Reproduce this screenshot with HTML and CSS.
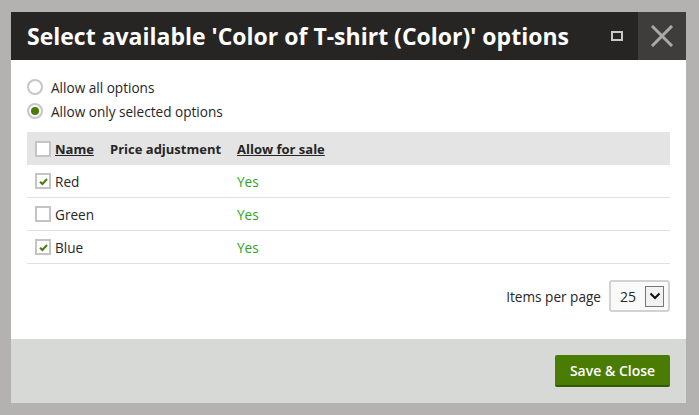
FILE: index.html
```html
<!DOCTYPE html>
<html>
<head>
<meta charset="utf-8">
<link rel="stylesheet" href="styles.css">
</head>
<body>
<div class="dialog">
  <div class="header">
    <h1 class="title">Select available 'Color of T-shirt (Color)' options</h1>
    <div class="maximize"><span class="max-box"></span></div>
    <div class="close">
      <svg width="22" height="22" viewBox="0 0 22 22"><path d="M2 2 L20 20 M20 2 L2 20" stroke="#a9a9a9" stroke-width="3" stroke-linecap="square"/></svg>
    </div>
  </div>
  <div class="content">
    <div class="radios">
      <label class="radio-row"><span class="radio"></span>Allow all options</label>
      <label class="radio-row"><span class="radio checked"></span>Allow only selected options</label>
    </div>
    <div class="grid">
      <div class="row head">
        <div class="cell c-name"><span class="cb"></span><span class="link">Name</span></div>
        <div class="cell c-price">Price adjustment</div>
        <div class="cell c-allow"><span class="link">Allow for sale</span></div>
      </div>
      <div class="row">
        <div class="cell c-name"><span class="cb on"><svg width="11" height="11" viewBox="0 0 11 11"><path d="M2 5.8 L4.4 8 L9 3" fill="none" stroke="#4a7c0a" stroke-width="2"/></svg></span>Red</div>
        <div class="cell c-price"></div>
        <div class="cell c-allow yes">Yes</div>
      </div>
      <div class="row">
        <div class="cell c-name"><span class="cb"></span>Green</div>
        <div class="cell c-price"></div>
        <div class="cell c-allow yes">Yes</div>
      </div>
      <div class="row">
        <div class="cell c-name"><span class="cb on"><svg width="11" height="11" viewBox="0 0 11 11"><path d="M2 5.8 L4.4 8 L9 3" fill="none" stroke="#4a7c0a" stroke-width="2"/></svg></span>Blue</div>
        <div class="cell c-price"></div>
        <div class="cell c-allow yes">Yes</div>
      </div>
    </div>
    <div class="pager">
      <span class="pager-label">Items per page</span>
      <div class="select">
        <span class="select-val">25</span>
        <span class="select-btn"><svg width="12" height="8" viewBox="0 0 12 8"><path d="M1.5 1.5 L6 6 L10.5 1.5" fill="none" stroke="#111" stroke-width="2"/></svg></span>
      </div>
    </div>
  </div>
  <div class="footer">
    <button class="btn">Save &amp; Close</button>
  </div>
</div>
</body>
</html>
```
FILE: styles.css
```css
* { box-sizing: border-box; }
html, body { margin: 0; padding: 0; }
body {
  background: #b3b2b0;
  font-family: "Open Sans", "Noto Sans", sans-serif;
  color: #262626;
  width: 699px;
  height: 415px;
  overflow: hidden;
}
.dialog {
  margin: 12px 0 0 11px;
  width: 675px;
  height: 391px;
  background: #fff;
  display: flex;
  flex-direction: column;
}
.header {
  height: 48px;
  background: #262524;
  display: flex;
  align-items: center;
}
.title {
  margin: 0 0 0 16px;
  flex: 1;
  color: #fff;
  font-size: 23px;
  font-weight: 700;
  letter-spacing: 0;
  white-space: nowrap;
}
.maximize {
  width: 48px;
  height: 48px;
  display: flex;
  align-items: center;
  justify-content: center;
}
.max-box {
  width: 12px;
  height: 10px;
  border: 2px solid #c8c8c8;
  margin-left: 6px;
}
.close {
  width: 48px;
  height: 48px;
  background: #3e3d3b;
  display: flex;
  align-items: center;
  justify-content: center;
}
.content {
  flex: 1;
  padding: 16px 16px 0 16px;
}
.radios {
  display: flex;
  flex-direction: column;
  gap: 8px;
  margin-top: 3px;
}
.radio-row {
  display: flex;
  align-items: center;
  height: 16px;
  font-size: 13.6px;
  color: #262626;
}
.radio {
  width: 16px;
  height: 16px;
  border-radius: 50%;
  border: 2px solid #c6c6c6;
  margin-right: 8px;
  background: #fff;
  display: flex;
  align-items: center;
  justify-content: center;
}
.radio.checked::after {
  content: "";
  width: 8px;
  height: 8px;
  border-radius: 50%;
  background: #4a7c0a;
}
.grid {
  margin-top: 13px;
  width: 643px;
}
.row {
  display: flex;
  height: 33px;
  align-items: center;
  border-bottom: 1px solid #e1e1e1;
  font-size: 13.6px;
}
.row.head {
  background: #e4e4e4;
  border-bottom: none;
  font-weight: 700;
  font-size: 13px;
}
.cell { display: flex; align-items: center; }
.c-name { width: 83px; padding-left: 8px; }
.c-price { width: 127px; }
.c-allow { flex: 1; }
.link { text-decoration: underline; }
.yes { color: #31a41f; }
.cb {
  width: 16px;
  height: 16px;
  border: 2px solid #c4c4c4;
  background: #fff;
  margin-right: 4px;
  display: flex;
  align-items: center;
  justify-content: center;
}
.pager {
  margin-top: 16px;
  display: flex;
  justify-content: flex-end;
  align-items: center;
  gap: 8px;
  width: 643px;
}
.pager-label { font-size: 13.6px; }
.select {
  width: 61px;
  height: 32px;
  border: 2px solid #d2d2d2;
  border-radius: 3px;
  background: #fafafa;
  display: flex;
  align-items: center;
  padding-left: 9px;
}
.select-val { font-size: 14px; width: 25px; }
.select-btn {
  width: 19px;
  height: 21px;
  border: 1px solid #777;
  background: #f2f2f2;
  display: flex;
  align-items: center;
  justify-content: center;
}
.footer {
  height: 64px;
  background: #d7d9d6;
  display: flex;
  justify-content: flex-end;
  align-items: center;
  padding-right: 16px;
}
.btn {
  width: 115px;
  height: 32px;
  background: #4a7c04;
  border: none;
  border-bottom: 2px solid #345a02;
  border-radius: 2px;
  color: #fff;
  font-family: "Open Sans", sans-serif;
  font-size: 14px;
  font-weight: 600;
  padding: 0;
}
```
